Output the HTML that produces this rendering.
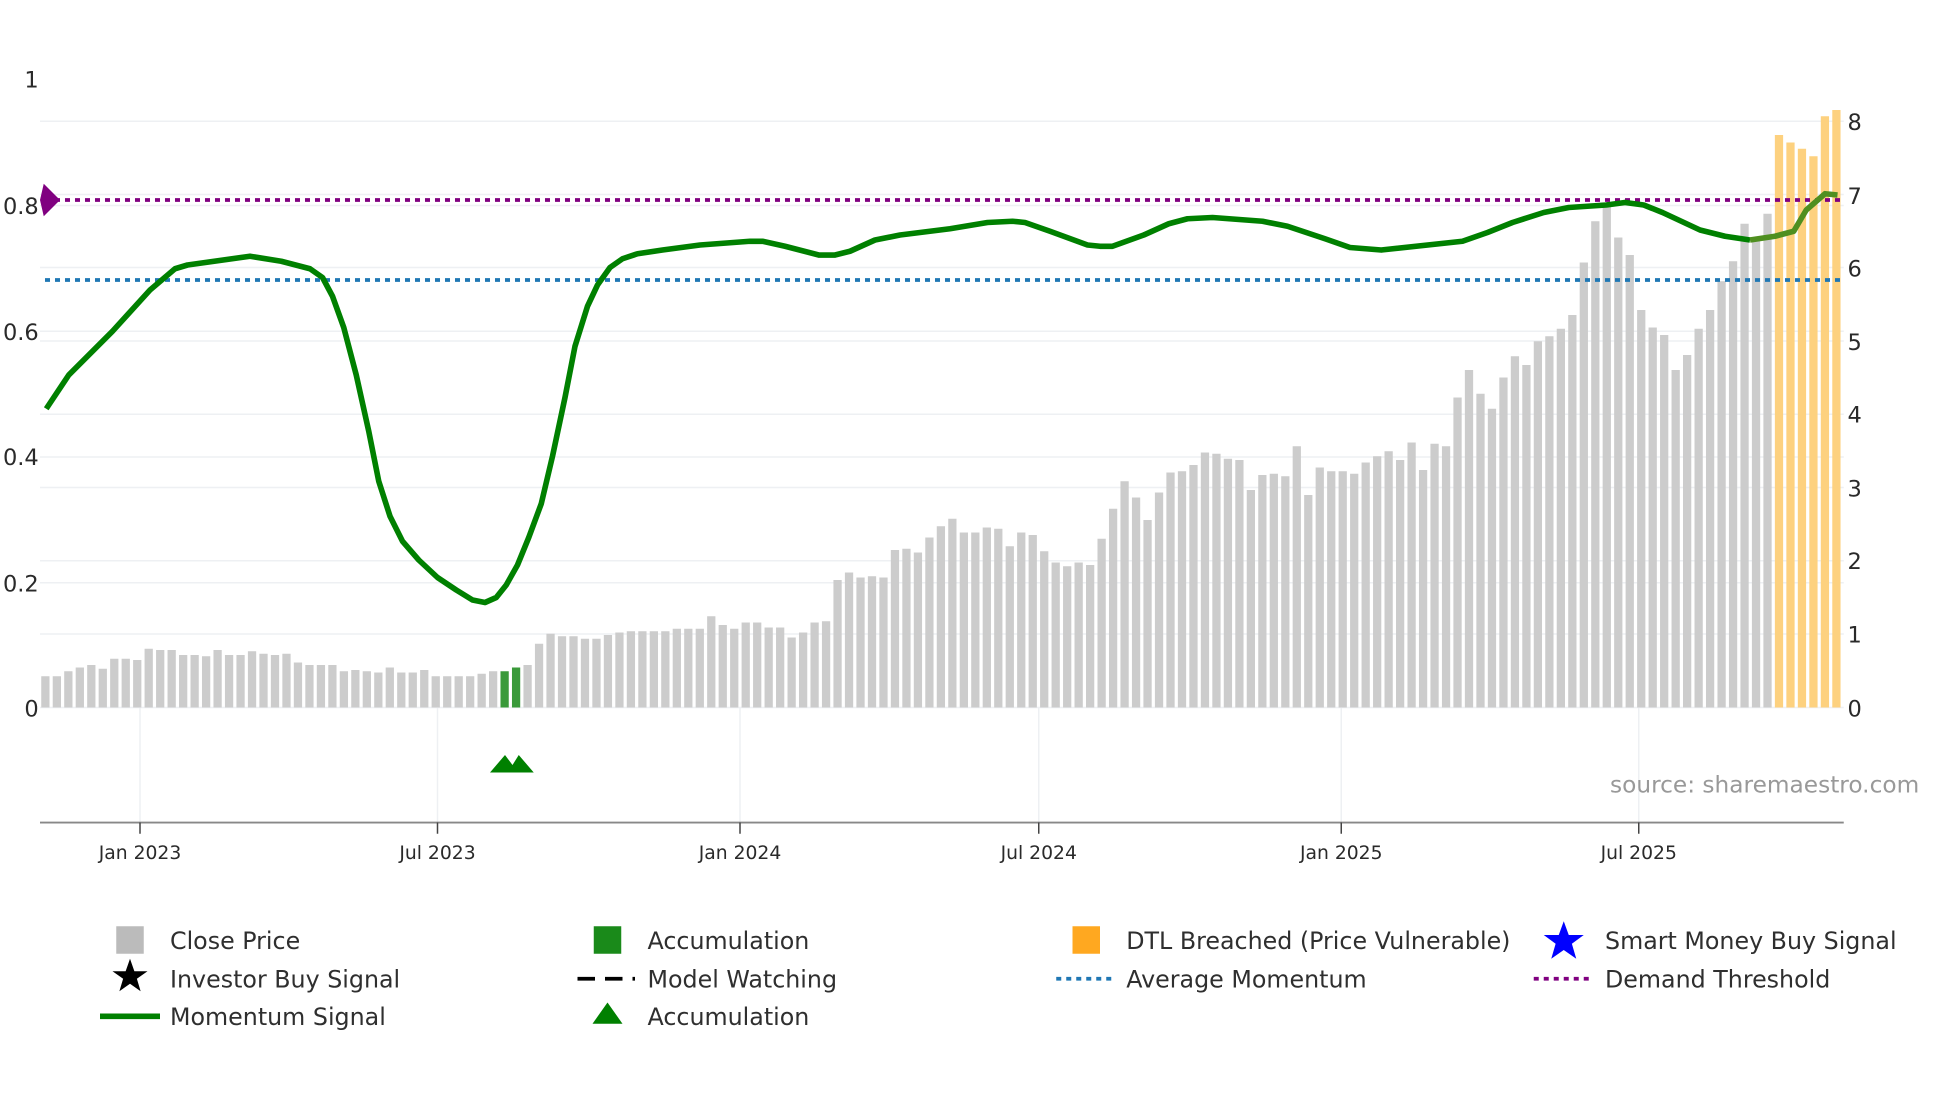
<!DOCTYPE html>
<html><head><meta charset="utf-8"><style>
html,body{margin:0;padding:0;background:#fff;width:1960px;height:1102px;overflow:hidden}
svg{display:block}
text{font-family:"DejaVu Sans","Liberation Sans",sans-serif}
</style></head><body>
<svg id="s" width="1960" height="1102" viewBox="0 0 1568 881.6" xmlns="http://www.w3.org/2000/svg">
<g stroke="#eef0f3" stroke-width="1.2">
<line x1="32" x2="1475" y1="97" y2="97"/><line x1="32" x2="1475" y1="155.6" y2="155.6"/>
<line x1="32" x2="1475" y1="214" y2="214"/><line x1="32" x2="1475" y1="272.8" y2="272.8"/>
<line x1="32" x2="1475" y1="331.4" y2="331.4"/><line x1="32" x2="1475" y1="390" y2="390"/>
<line x1="32" x2="1475" y1="448.6" y2="448.6"/><line x1="32" x2="1475" y1="507.2" y2="507.2"/>
<line x1="32" x2="1475" y1="164.4" y2="164.4"/><line x1="32" x2="1475" y1="265" y2="265"/>
<line x1="32" x2="1475" y1="365.6" y2="365.6"/><line x1="32" x2="1475" y1="466.2" y2="466.2"/>
<line x1="32" x2="1475" y1="566" y2="566"/>
<line x1="112" x2="112" y1="566" y2="658"/><line x1="350" x2="350" y1="566" y2="658"/>
<line x1="592" x2="592" y1="566" y2="658"/><line x1="831" x2="831" y1="566" y2="658"/>
<line x1="1073" x2="1073" y1="566" y2="658"/><line x1="1311" x2="1311" y1="566" y2="658"/>
</g>
<g id="bars"></g>
<line x1="36" x2="1475" y1="224" y2="224" stroke="#1f77b4" stroke-width="3" stroke-dasharray="4,4"/>
<line x1="44" x2="1475" y1="160" y2="160" stroke="#800080" stroke-width="3" stroke-dasharray="4,4"/>
<polygon points="35,147 48,160 35,173 32,160" fill="#800080"/>
<polyline fill="none" stroke="#008000" stroke-width="4.5" stroke-linejoin="round" points="37,327 55,300 90,265 120,232 140,215 150,212 200,205 225,209 248,215 258,222 266,237 275,262 285,300 295,345 303,385 312,413 322,433 335,448 350,462 365,472 378,480 388,482 397,478 405,468 414,452 423,430 433,403 442,365 452,318 460,277 470,245 478,228 488,214 498,207 510,203 530,200 560,196 600,193 610,193 628,197 655,204 668,204 680,201 700,192 720,188 760,183 790,178 810,177 820,178 840,185 870,196 880,197 890,197 915,188 935,179 950,175 970,174 1010,177 1030,181 1060,191 1080,198 1105,200 1170,193 1190,186 1210,178 1235,170 1255,166 1285,164 1300,162 1315,164 1330,170 1360,184 1380,189 1400,192"/>
<polyline fill="none" stroke="#4f8f20" stroke-width="4.5" stroke-linejoin="round" points="1400,192 1420,189 1435,185 1445,168 1460,155 1470,156"/>
<polygon points="392,618 404,604 410,612 415,604 427,618" fill="#008000"/>
<line x1="32" x2="1475" y1="658" y2="658" stroke="#888" stroke-width="1.5"/>
<g stroke="#444" stroke-width="1.2">
<line x1="112" x2="112" y1="658" y2="667"/><line x1="350" x2="350" y1="658" y2="667"/>
<line x1="592" x2="592" y1="658" y2="667"/><line x1="831" x2="831" y1="658" y2="667"/>
<line x1="1073" x2="1073" y1="658" y2="667"/><line x1="1311" x2="1311" y1="658" y2="667"/>
</g>
<g font-size="15" fill="#2a2a2a" text-anchor="middle">
<text x="112" y="687">Jan 2023</text><text x="350" y="687">Jul 2023</text>
<text x="592" y="687">Jan 2024</text><text x="831" y="687">Jul 2024</text>
<text x="1073" y="687">Jan 2025</text><text x="1311" y="687">Jul 2025</text>
</g>
<g font-size="18" fill="#2a2a2a" text-anchor="end">
<text x="31" y="70">1</text><text x="31" y="171">0.8</text><text x="31" y="272">0.6</text>
<text x="31" y="372">0.4</text><text x="31" y="473">0.2</text><text x="31" y="573">0</text>
</g>
<g font-size="18" fill="#2a2a2a">
<text x="1478" y="104">8</text><text x="1478" y="163">7</text><text x="1478" y="221">6</text>
<text x="1478" y="280">5</text><text x="1478" y="338">4</text><text x="1478" y="397">3</text>
<text x="1478" y="455">2</text><text x="1478" y="514">1</text><text x="1478" y="573">0</text>
</g>
<text x="1288" y="634" font-size="18.6" fill="#999">source: sharemaestro.com</text>
<g font-size="19" fill="#2f2f2f">
<rect x="93" y="741" width="22" height="22" fill="#bbb"/>
<text x="136" y="759">Close Price</text>
<polygon points="104,767 107.5,777 118,777 109.5,783 112.5,793 104,787 95.5,793 98.5,783 90,777 100.5,777" fill="#000"/>
<text x="136" y="790">Investor Buy Signal</text>
<line x1="80" x2="128" y1="813" y2="813" stroke="#008000" stroke-width="4.5"/>
<text x="136" y="820">Momentum Signal</text>
<rect x="475" y="741" width="22" height="22" fill="#1a8a1a"/>
<text x="518" y="759">Accumulation</text>
<line x1="462" x2="508" y1="783" y2="783" stroke="#000" stroke-width="3" stroke-dasharray="14,8"/>
<text x="518" y="790">Model Watching</text>
<polygon points="474,819 486,802 498,819" fill="#008000"/>
<text x="518" y="820">Accumulation</text>
<rect x="858" y="741" width="22" height="22" fill="#ffa820"/>
<text x="901" y="759">DTL Breached (Price Vulnerable)</text>
<line x1="845" x2="890" y1="783" y2="783" stroke="#1f77b4" stroke-width="3" stroke-dasharray="4,4"/>
<text x="901" y="790">Average Momentum</text>
<polygon points="1251,737 1255,748 1267,748 1257.5,755 1261,767 1251,760 1241,767 1244.5,755 1235,748 1247,748" fill="#0000ff"/>
<text x="1284" y="759">Smart Money Buy Signal</text>
<line x1="1227" x2="1273" y1="783" y2="783" stroke="#800080" stroke-width="3" stroke-dasharray="4,4"/>
<text x="1284" y="790">Demand Threshold</text>
</g>
</svg>
<script>
var t=[541,541,537,534,532,535,527,527,528,519,520,520,524,524,525,520,524,524,521,523,524,523,530,532,532,532,537,536,537,538,534,538,538,536,541,541,541,541,539,537,537,534,532,515,507,509,509,511,511,508,506,505,505,505,505,503,503,503,493,500,503,498,498,502,502,510,506,498,497,464,458,462,461,462,440,439,442,430,421,415,426,426,422,423,437,426,428,441,450,453,450,452,431,407,385,398,416,394,378,377,372,362,363,367,368,392,380,379,381,357,396,374,377,377,379,370,365,361,368,354,376,355,357,318,296,315,327,302,285,292,273,269,263,252,210,177,163,190,204,248,262,268,296,284,263,248,225,209,179,192,171,108,114,119,125,93,88];
var N=t.length,x0=33,x1=1475,w=(x1-x0)/N,g=document.getElementById('bars'),h='';
for(var i=0;i<N;i++){var c='#cccccc';if(i==40||i==41)c='#3a9a3a';if(i>=N-6)c='#fdd17f';
h+='<rect x="'+(x0+i*w).toFixed(2)+'" y="'+t[i]+'" width="'+(w*0.72).toFixed(2)+'" height="'+(566-t[i])+'" fill="'+c+'"/>';}
g.innerHTML=h;
</script>
</body></html>
